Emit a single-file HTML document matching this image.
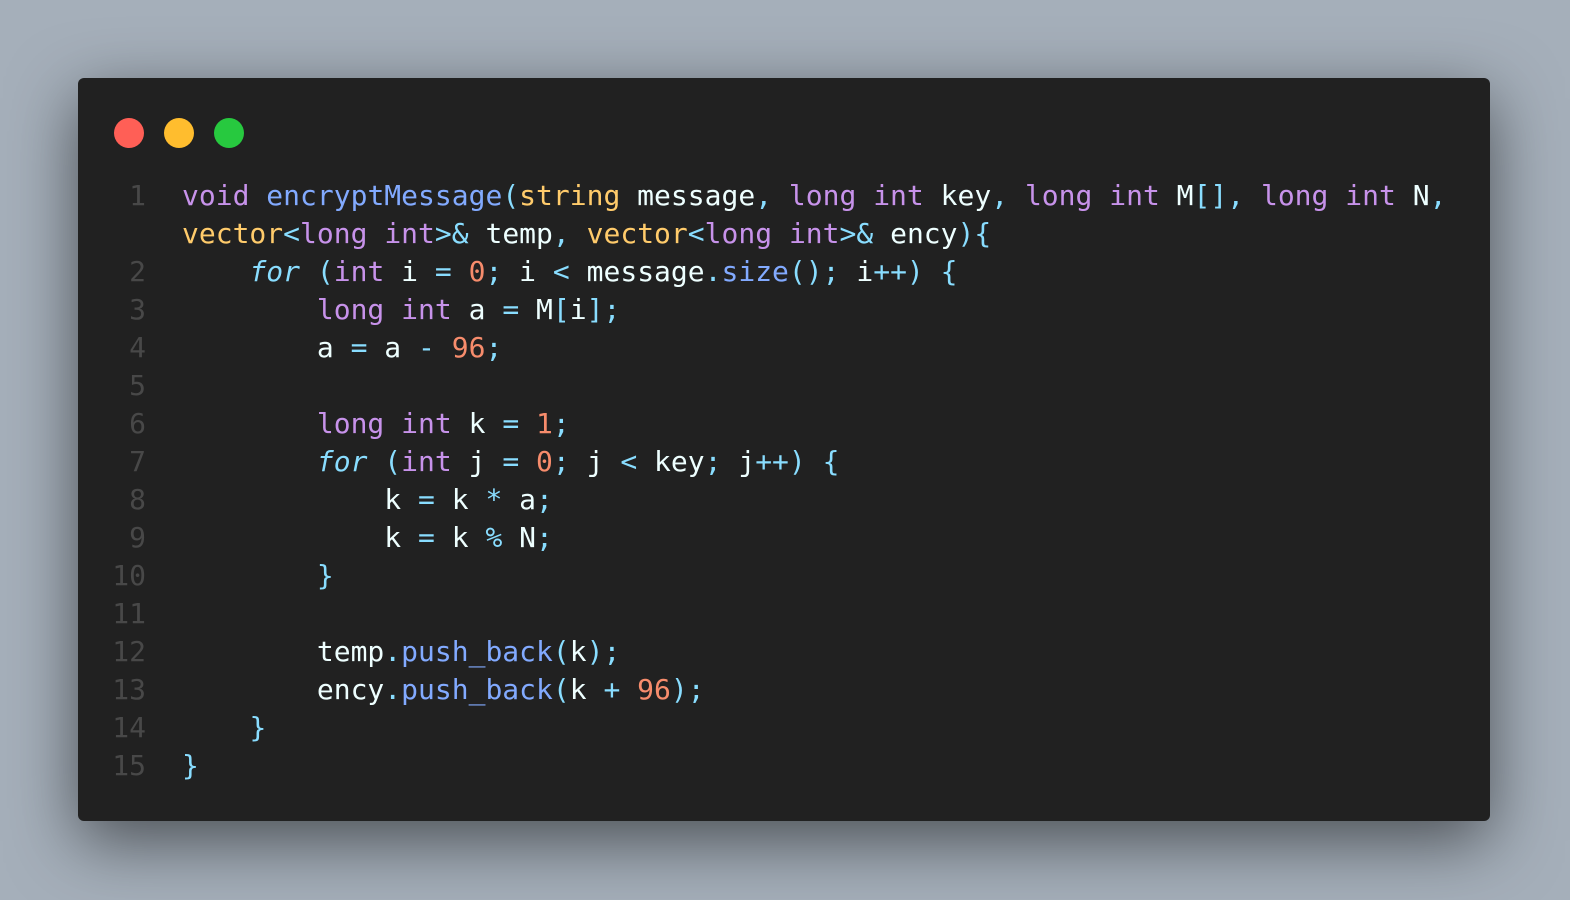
<!DOCTYPE html>
<html><head><meta charset="utf-8"><style>
html,body{margin:0;padding:0;}
body{width:1570px;height:900px;background:#a5afba;position:relative;overflow:hidden;}
.win{position:absolute;left:78px;top:78px;width:1412px;height:743px;background:#212121;border-radius:6px;box-shadow:0 20px 68px rgba(0,0,0,0.55);}
.dot{position:absolute;top:40px;width:30px;height:30px;border-radius:50%;}
pre{margin:0;position:absolute;font-family:"DejaVu Sans Mono","Liberation Mono",monospace;font-size:28px;line-height:38px;}
.ln{left:0;top:99px;width:68px;text-align:right;color:#484848;}
.code{left:104px;top:99px;color:#eeffff;}
.k{color:#c792ea}.f{color:#82aaff}.t{color:#ffcb6b}.p{color:#89ddff}.n{color:#f78c6c}.i{color:#89ddff;font-style:italic}
</style></head><body>
<div class="win">
<div class="dot" style="left:36px;background:#ff5f56"></div>
<div class="dot" style="left:86px;background:#ffbd2e"></div>
<div class="dot" style="left:136px;background:#27c93f"></div>
<pre class="ln">1

2
3
4
5
6
7
8
9
10
11
12
13
14
15</pre>
<pre class="code"><span class="k">void</span> <span class="f">encryptMessage</span><span class="p">(</span><span class="t">string</span> message<span class="p">,</span> <span class="k">long</span> <span class="k">int</span> key<span class="p">,</span> <span class="k">long</span> <span class="k">int</span> M<span class="p">[],</span> <span class="k">long</span> <span class="k">int</span> N<span class="p">,</span>
<span class="t">vector</span><span class="p">&lt;</span><span class="k">long</span> <span class="k">int</span><span class="p">&gt;&amp;</span> temp<span class="p">,</span> <span class="t">vector</span><span class="p">&lt;</span><span class="k">long</span> <span class="k">int</span><span class="p">&gt;&amp;</span> ency<span class="p">){</span>
    <span class="i">for</span> <span class="p">(</span><span class="k">int</span> i <span class="p">=</span> <span class="n">0</span><span class="p">;</span> i <span class="p">&lt;</span> message<span class="p">.</span><span class="f">size</span><span class="p">();</span> i<span class="p">++)</span> <span class="p">{</span>
        <span class="k">long</span> <span class="k">int</span> a <span class="p">=</span> M<span class="p">[</span>i<span class="p">];</span>
        a <span class="p">=</span> a <span class="p">-</span> <span class="n">96</span><span class="p">;</span>

        <span class="k">long</span> <span class="k">int</span> k <span class="p">=</span> <span class="n">1</span><span class="p">;</span>
        <span class="i">for</span> <span class="p">(</span><span class="k">int</span> j <span class="p">=</span> <span class="n">0</span><span class="p">;</span> j <span class="p">&lt;</span> key<span class="p">;</span> j<span class="p">++)</span> <span class="p">{</span>
            k <span class="p">=</span> k <span class="p">*</span> a<span class="p">;</span>
            k <span class="p">=</span> k <span class="p">%</span> N<span class="p">;</span>
        <span class="p">}</span>

        temp<span class="p">.</span><span class="f">push_back</span><span class="p">(</span>k<span class="p">);</span>
        ency<span class="p">.</span><span class="f">push_back</span><span class="p">(</span>k <span class="p">+</span> <span class="n">96</span><span class="p">);</span>
    <span class="p">}</span>
<span class="p">}</span></pre>
</div>
</body></html>
